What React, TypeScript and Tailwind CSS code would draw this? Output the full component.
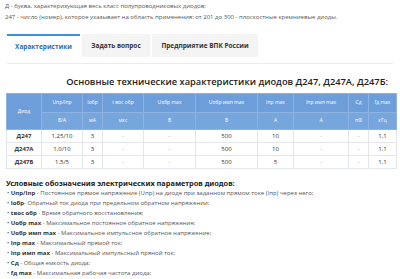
const HEAD = [
  ["Uпр/Iпр", "В/А"],
  ["Iобр", "мА"],
  ["t вос обр", "мкс"],
  ["Uобр max", "В"],
  ["Uобр имп max", "В"],
  ["Iпр max", "А"],
  ["Iпр имп max", "А"],
  ["Cд", "пФ"],
  ["fд max", "кГц"],
];

const ROWS = [
  ["Д247", "1,25/10", "3", "-", "-", "500", "10", "-", "-", "1,1"],
  ["Д247А", "1,0/10", "3", "-", "-", "500", "10", "-", "-", "1,1"],
  ["Д247Б", "1,5/5", "3", "-", "-", "500", "5", "-", "-", "1,1"],
];

const WIDTHS = ["w-[35px]", "w-[41px]", "w-[20px]", "w-[41px]", "w-[52px]", "w-[62px]", "w-[36px]", "w-[55px]", "w-[20px]", "w-[28px]"];

const LEGEND = [
  ["Uпр/Iпр", " - Постоянное прямое напряжение (Uпр) на диоде при заданном прямом токе (Iпр) через него;"],
  ["Iобр", "- Обратный ток диода при предельном обратном напряжении;"],
  ["tвос обр", " - Время обратного восстановления;"],
  ["Uобр max", " - Максимальное постоянное обратное напряжение;"],
  ["Uобр имп max", " - Максимальное импульсное обратное напряжение;"],
  ["Iпр max", " - Максимальный прямой ток;"],
  ["Iпр имп max", " - Максимальный импульсный пряной ток;"],
  ["Cд", " - Общая емкость диода;"],
  ["fд max", " - Максимальная рабочая частота диода;"],
  ["T", " - температура окружающей среды;"],
];

export default function App() {
  return (
    <div className="h-[279px] w-[400px] overflow-hidden bg-white font-['Open_Sans',sans-serif] text-[#444]">
      <div className="px-[5px] pt-[1px] text-[6px] leading-[11px] text-[#555]">
        <p>Д - буква, характеризующая весь класс полупроводниковых диодов;</p>
        <p>247 - число (номер), которое указывает на область применения: от 201 до 300 - плоскостные кремниевые диоды.</p>
      </div>

      <div className="ml-[7px] mt-[11px] flex gap-[2px]">
        <div className="flex h-[23px] w-[73px] items-center justify-center border-t-2 border-[#3d8fdf] bg-white text-[6.5px] font-bold text-[#2b6cb8]">
          Характеристики
        </div>
        <div className="flex h-[23px] w-[68px] items-center justify-center bg-[#f4f4f4] text-[6.5px] font-bold text-[#333]">
          Задать вопрос
        </div>
        <div className="flex h-[23px] w-[106px] items-center justify-center bg-[#f4f4f4] text-[6.5px] font-bold text-[#333]">
          Предприятие ВПК России
        </div>
      </div>
      <div className="mx-[7px] mt-[6px] border-t border-[#ececec]" />

      <h2 className="mt-[11px] pr-[12px] text-right text-[9.3px] font-semibold leading-[14px] text-[#222]">
        Основные технические характеристики диодов Д247, Д247А, Д247Б:
      </h2>

      <table className="ml-[6px] mt-[4px] w-[390px] table-fixed border-collapse text-center">
        <colgroup>
          {WIDTHS.map((w, i) => (
            <col key={i} className={w} />
          ))}
        </colgroup>
        <thead className="text-[5px] text-white">
          <tr className="h-[19px] bg-[#6d9ed9]">
            <th rowSpan={2} className="border border-[#8cb3e3] font-normal">Диод</th>
            {HEAD.map(([top]) => (
              <th key={top} className="border border-[#8cb3e3] font-normal">{top}</th>
            ))}
          </tr>
          <tr className="h-[17px] bg-[#77a6dd]">
            {HEAD.map(([top, unit]) => (
              <th key={top} className="border border-[#8cb3e3] font-normal">{unit}</th>
            ))}
          </tr>
        </thead>
        <tbody className="text-[6px] text-[#333]">
          {ROWS.map((row) => (
            <tr key={row[0]} className="h-[13px]">
              {row.map((cell, i) => (
                <td key={i} className={`border border-[#e3e6ea] ${i === 0 ? "font-bold" : ""} ${cell === "-" ? "text-[#999]" : ""}`}>
                  {cell}
                </td>
              ))}
            </tr>
          ))}
        </tbody>
      </table>

      <h3 className="ml-[6px] mt-[9px] font-['Noto_Sans',sans-serif] text-[7.4px] font-bold leading-[10px] text-[#222]">
        Условные обозначения электрических параметров диодов:
      </h3>
      <ul className="ml-[7px] text-[6px] leading-[10px] text-[#555]">
        {LEGEND.map(([term, text]) => (
          <li key={term}>
            • <b className="text-[#333]">{term}</b>
            {text}
          </li>
        ))}
      </ul>
    </div>
  );
}
